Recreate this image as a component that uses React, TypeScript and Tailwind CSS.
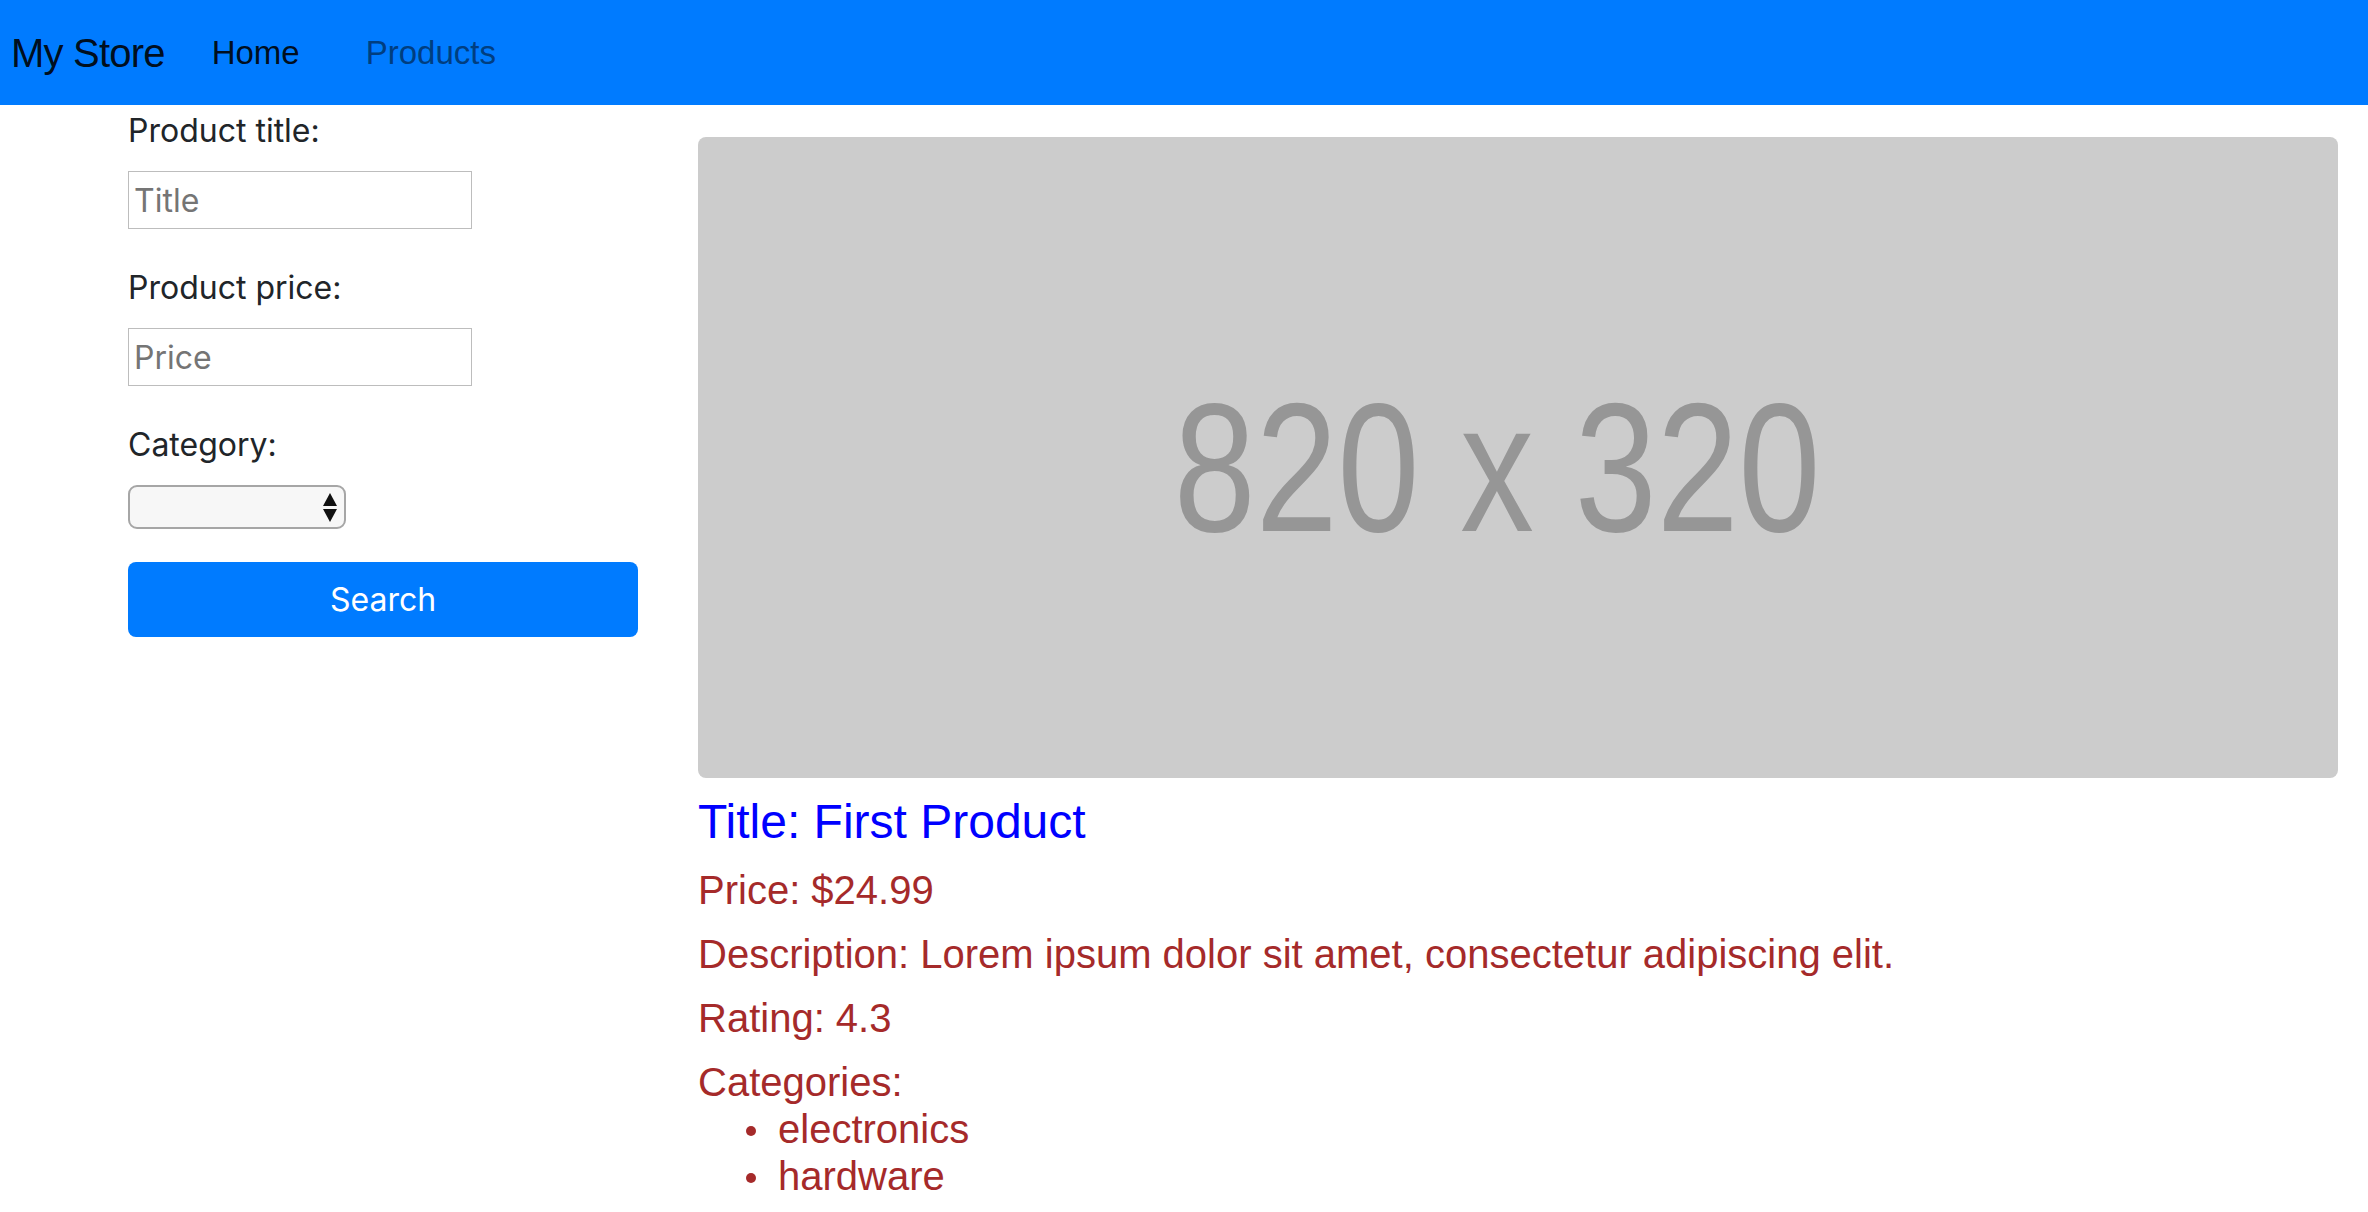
const categories = ["electronics", "hardware"];

function SelectArrows() {
  return (
    <svg width="14" height="29" viewBox="0 0 14 29" className="pointer-events-none absolute right-[9px] top-[8px]">
      <polygon points="7,0 14,13 0,13" fill="#111" />
      <polygon points="0,16 14,16 7,29" fill="#111" />
    </svg>
  );
}

export default function App() {
  return (
    <div className="min-h-screen bg-white font-['Liberation_Sans',Arial,sans-serif]">
      {/* Navbar */}
      <nav className="h-[105px] bg-[#007bff] flex items-center pl-[11px]">
        <span className="text-[40px] text-black/90 tracking-[-0.8px] mr-[47px]">My Store</span>
        <a className="text-[33px] text-black/90 mr-[66px]">Home</a>
        <a className="text-[33px] text-[#003e80]">Products</a>
      </nav>

      <div className="flex">
        {/* Search form */}
        <form className="w-[510px] ml-[128px] shrink-0 font-['Inter',sans-serif] text-[#212529]">
          <label className="block text-[32px] leading-[48px] mt-[2px] mb-[16px]">Product title:</label>
          <input
            placeholder="Title"
            className="block w-[344px] h-[58px] border border-[#bdbdbd] px-[5px] text-[32px] placeholder:text-[#757575] mb-[35px] outline-none"
          />
          <label className="block text-[32px] leading-[48px] mb-[16px]">Product price:</label>
          <input
            placeholder="Price"
            className="block w-[344px] h-[58px] border border-[#bdbdbd] px-[5px] text-[32px] placeholder:text-[#757575] mb-[35px] outline-none"
          />
          <label className="block text-[32px] leading-[48px] mb-[16px]">Category:</label>
          <div className="relative w-[218px] h-[44px] mb-[33px]">
            <select className="appearance-none w-full h-full rounded-[9px] border-2 border-[#a6a6a6] bg-[#f7f7f7] outline-none" />
            <SelectArrows />
          </div>
          <button
            type="button"
            className="w-[510px] h-[75px] rounded-[8px] bg-[#007bff] text-white text-[32px]"
          >
            Search
          </button>
        </form>

        {/* Product */}
        <div className="flex-1 ml-[60px] mr-[30px] pt-[32px]">
          <div className="h-[641px] rounded-[8px] bg-[#cccccc] flex items-center justify-center pr-[42px] pt-[18px] overflow-hidden">
            <span className="inline-block text-[184px] leading-none text-[#969696] scale-x-[0.8]">820 x 320</span>
          </div>
          <h4 className="text-[48px] leading-[56px] text-[#0000ff] mt-[16px] mb-[16px]">Title: First Product</h4>
          <h5 className="text-[40px] leading-[48px] text-[#a52a2a] mb-[16px]">Price: $24.99</h5>
          <h5 className="text-[40px] leading-[48px] text-[#a52a2a] mb-[16px]">
            Description: Lorem ipsum dolor sit amet, consectetur adipiscing elit.
          </h5>
          <h5 className="text-[40px] leading-[48px] text-[#a52a2a] mb-[16px]">Rating: 4.3</h5>
          <h5 className="text-[40px] leading-[48px] text-[#a52a2a]">
            Categories:
            <ul className="pl-[48px]">
              {categories.map((c) => (
                <li key={c} className="flex items-center leading-[47px]">
                  <span className="w-[10px] h-[10px] rounded-full bg-[#a52a2a] mr-[22px] mt-[2px]" />
                  {c}
                </li>
              ))}
            </ul>
          </h5>
        </div>
      </div>
    </div>
  );
}
